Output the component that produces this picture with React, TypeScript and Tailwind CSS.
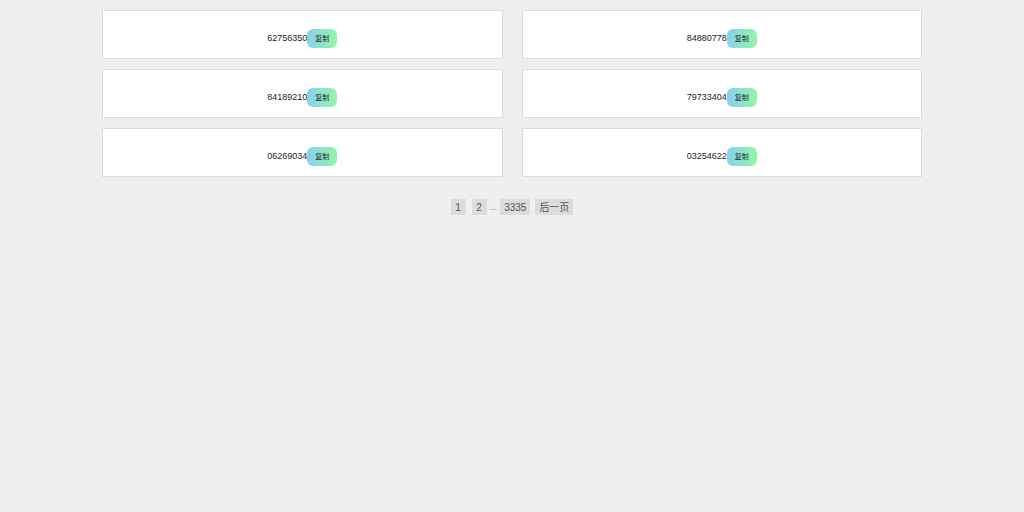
import React from "react";

const codes = ["62756350", "84880778", "84189210", "79733404", "06269034", "03254622"];

function CodeCard({ code }: { code: string }) {
  return (
    <div className="h-[49px] bg-white border border-[#dcdcdc] flex items-end justify-center pb-[10px]">
      <span className="text-[9px] leading-[19px] text-[#222]">{code}</span>
      <button className="h-[19px] w-[30px] rounded-[6px] bg-gradient-to-r from-[#88d0ee] to-[#94f5a0] text-[7px] text-[#222] leading-none">
        复制
      </button>
    </div>
  );
}

export default function App() {
  return (
    <div
      className="min-h-[512px] bg-[#efefef] pt-[10px]"
      style={{ fontFamily: '"Liberation Sans", Arial, "Noto Sans CJK SC", sans-serif' }}
    >
      <div className="w-[820px] mx-auto grid grid-cols-2 gap-x-[19px] gap-y-[10px]">
        {codes.map((c) => (
          <CodeCard key={c} code={c} />
        ))}
      </div>
      <div className="flex justify-center items-center mt-[22px] text-[10px] text-[#555]">
        <span className="h-[16px] w-[15px] bg-[#dcdcdc] flex items-center justify-center">1</span>
        <span className="h-[16px] w-[15px] bg-[#dcdcdc] flex items-center justify-center ml-[6px]">2</span>
        <span className="mx-[3px] text-[9px] text-[#888] leading-[16px]">...</span>
        <span className="h-[16px] px-[4px] bg-[#dcdcdc] flex items-center justify-center">3335</span>
        <span className="h-[16px] px-[4px] bg-[#dcdcdc] flex items-center justify-center ml-[5px]">后一页</span>
      </div>
    </div>
  );
}
